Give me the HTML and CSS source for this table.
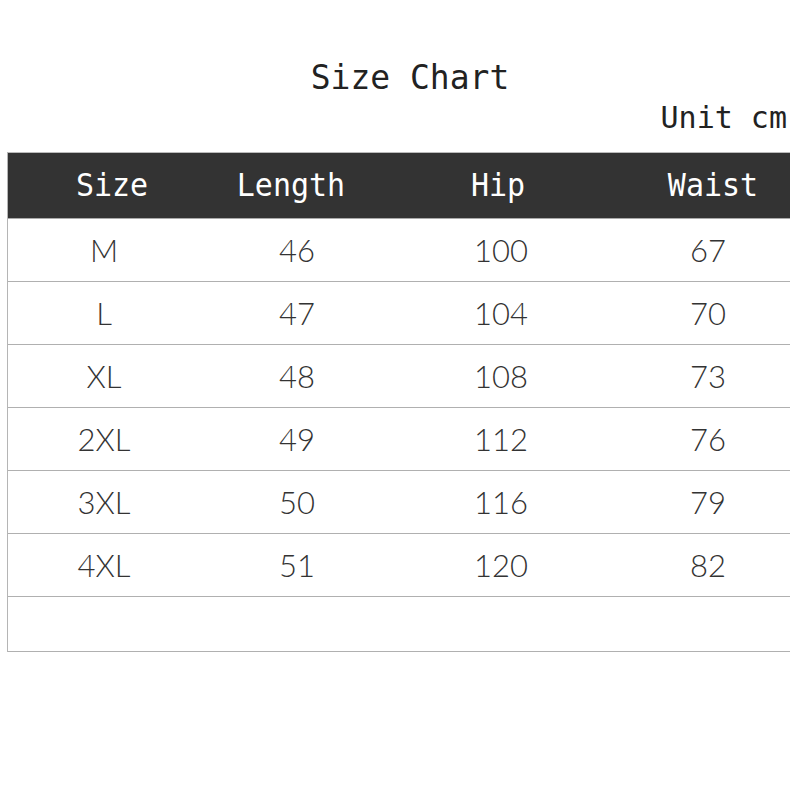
FILE: index.html
```html
<!DOCTYPE html>
<html>
<head>
<meta charset="utf-8">
<link rel="stylesheet" href="styles.css">
</head>
<body>
<div class="page">
  <h1 class="title"><span class="tall">Size Chart</span></h1>
  <div class="unit">Unit cm</div>
  <div class="chart">
    <div class="row head">
      <div class="cell c1"><span class="tall">Size</span></div>
      <div class="cell c2"><span class="tall">Length</span></div>
      <div class="cell c3"><span class="tall">Hip</span></div>
      <div class="cell c4"><span class="tall">Waist</span></div>
    </div>
    <div class="row"><div class="cell c1">M</div><div class="cell c2">46</div><div class="cell c3">100</div><div class="cell c4">67</div></div>
    <div class="row"><div class="cell c1">L</div><div class="cell c2">47</div><div class="cell c3">104</div><div class="cell c4">70</div></div>
    <div class="row"><div class="cell c1">XL</div><div class="cell c2">48</div><div class="cell c3">108</div><div class="cell c4">73</div></div>
    <div class="row"><div class="cell c1">2XL</div><div class="cell c2">49</div><div class="cell c3">112</div><div class="cell c4">76</div></div>
    <div class="row"><div class="cell c1">3XL</div><div class="cell c2">50</div><div class="cell c3">116</div><div class="cell c4">79</div></div>
    <div class="row"><div class="cell c1">4XL</div><div class="cell c2">51</div><div class="cell c3">120</div><div class="cell c4">82</div></div>
    <div class="row empty"></div>
  </div>
</div>
</body>
</html>
```
FILE: styles.css
```css
html, body {
  margin: 0;
  padding: 0;
  background: #fff;
}
.page {
  width: 800px;
  height: 800px;
  padding-top: 58px;
  box-sizing: border-box;
}
.title {
  margin: 0;
  padding-left: 20px;
  text-align: center;
  font-family: "DejaVu Sans Mono", monospace;
  font-weight: normal;
  font-size: 33px;
  line-height: 40px;
  color: #222;
}
.tall {
  display: inline-block;
  transform: scaleY(1.04);
  transform-origin: 50% 75%;
}
.unit {
  margin-top: 3px;
  padding-right: 13px;
  text-align: right;
  font-family: "DejaVu Sans Mono", monospace;
  font-size: 30px;
  line-height: 34px;
  color: #222;
}
.chart {
  margin: 17px 0 0 7px;
  width: 782px;
  border-left: 1px solid #b5b5b5;
}
.row {
  display: grid;
  grid-template-columns: 192px 194px 214px 182px;
  height: 62px;
  align-items: center;
  border-bottom: 1px solid #b0b0b0;
  font-family: "Lato", "Liberation Sans", sans-serif;
  font-weight: 300;
  font-size: 31px;
  color: #333;
}
.row.head {
  height: 65px;
  background: #333;
  border-bottom: 1px solid #aaa;
  border-top: 1px solid #bbb;
  font-family: "DejaVu Sans Mono", monospace;
  font-weight: normal;
  font-size: 30px;
  color: #fff;
}
.row.first {
  height: 63px;
}
.row.empty {
  height: 54px;
}
.cell {
  text-align: center;
}
.c4 {
  padding-left: 18px;
}
.head .c1 { padding-left: 16px; }
.head .c2 { padding-right: 12px; }
.head .c3 { padding-right: 6px; }
.head .c4 { padding-left: 28px; }
```
